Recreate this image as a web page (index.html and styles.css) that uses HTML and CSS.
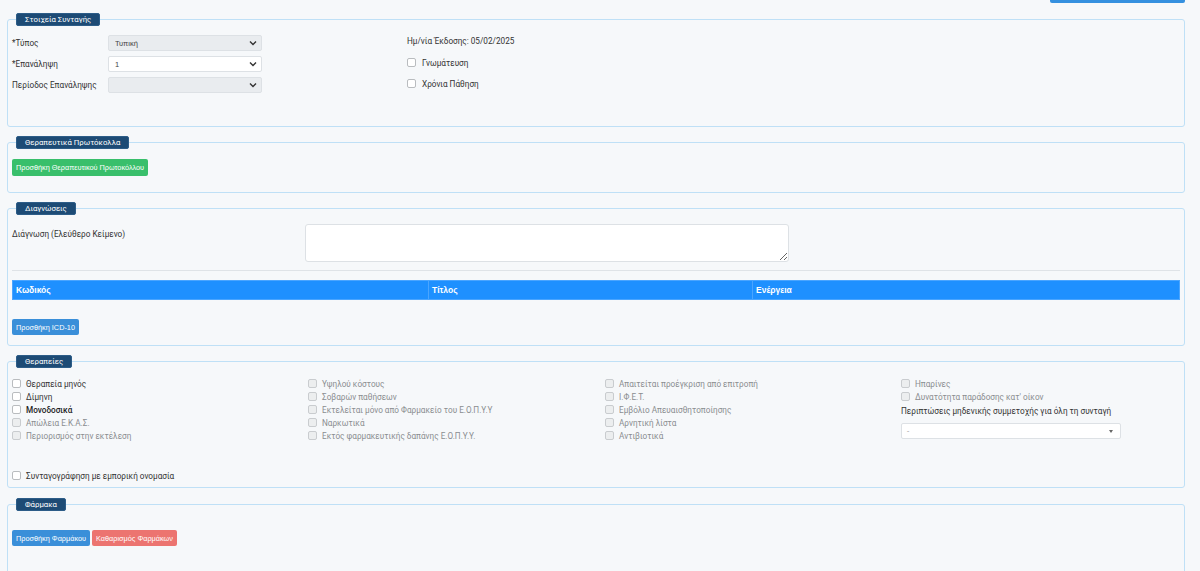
FILE: index.html
```html
<!DOCTYPE html>
<html lang="el">
<head>
<meta charset="utf-8">
<link rel="stylesheet" href="styles.css">
</head>
<body>
<div class="page">
  <div class="topbar"><button class="top-btn" type="button"></button></div>

  <section class="box box-info">
    <div class="box-title">Στοιχεία Συνταγής</div>
    <div class="info-grid">
      <div class="info-left">
        <div class="frow"><label>*Τύπος</label><select class="sel" disabled><option>Τυπική</option></select></div>
        <div class="frow"><label>*Επανάληψη</label><select class="sel white"><option>1</option></select></div>
        <div class="frow"><label>Περίοδος Επανάληψης</label><select class="sel" disabled><option></option></select></div>
      </div>
      <div class="info-right">
        <div class="date">Ημ/νία Έκδοσης: 05/02/2025</div>
        <label class="chk big"><input type="checkbox"><span>Γνωμάτευση</span></label>
        <label class="chk big"><input type="checkbox"><span>Χρόνια Πάθηση</span></label>
      </div>
    </div>
  </section>

  <section class="box box-proto">
    <div class="box-title">Θεραπευτικά Πρωτόκολλα</div>
    <button class="btn green" type="button">Προσθήκη Θεραπευτικού Πρωτοκόλλου</button>
  </section>

  <section class="box box-diag">
    <div class="box-title">Διαγνώσεις</div>
    <div class="diag-row">
      <label>Διάγνωση (Ελεύθερο Κείμενο)</label>
      <textarea class="ta"></textarea>
    </div>
    <hr class="sep">
    <table class="tbl">
      <thead><tr><th class="c1">Κωδικός</th><th class="c2">Τίτλος</th><th>Ενέργεια</th></tr></thead>
    </table>
    <button class="btn blue" type="button">Προσθήκη ICD-10</button>
  </section>

  <section class="box box-ther">
    <div class="box-title">Θεραπείες</div>
    <div class="ther-grid">
      <div class="col">
        <label class="chk"><input type="checkbox"><span>Θεραπεία μηνός</span></label>
        <label class="chk"><input type="checkbox"><span>Δίμηνη</span></label>
        <label class="chk"><input type="checkbox"><span class="strong">Μονοδοσικά</span></label>
        <label class="chk off"><input type="checkbox" disabled><span>Απώλεια Ε.Κ.Α.Σ.</span></label>
        <label class="chk off"><input type="checkbox" disabled><span>Περιορισμός στην εκτέλεση</span></label>
      </div>
      <div class="col">
        <label class="chk off"><input type="checkbox" disabled><span>Υψηλού κόστους</span></label>
        <label class="chk off"><input type="checkbox" disabled><span>Σοβαρών παθήσεων</span></label>
        <label class="chk off"><input type="checkbox" disabled><span>Εκτελείται μόνο από Φαρμακείο του Ε.Ο.Π.Υ.Υ</span></label>
        <label class="chk off"><input type="checkbox" disabled><span>Ναρκωτικά</span></label>
        <label class="chk off"><input type="checkbox" disabled><span>Εκτός φαρμακευτικής δαπάνης Ε.Ο.Π.Υ.Υ.</span></label>
      </div>
      <div class="col">
        <label class="chk off"><input type="checkbox" disabled><span>Απαιτείται προέγκριση από επιτροπή</span></label>
        <label class="chk off"><input type="checkbox" disabled><span>Ι.Φ.Ε.Τ.</span></label>
        <label class="chk off"><input type="checkbox" disabled><span>Εμβόλιο Απευαισθητοποίησης</span></label>
        <label class="chk off"><input type="checkbox" disabled><span>Αρνητική λίστα</span></label>
        <label class="chk off"><input type="checkbox" disabled><span>Αντιβιοτικά</span></label>
      </div>
      <div class="col">
        <label class="chk off"><input type="checkbox" disabled><span>Ηπαρίνες</span></label>
        <label class="chk off"><input type="checkbox" disabled><span>Δυνατότητα παράδοσης κατ' οίκον</span></label>
        <div class="zero-label">Περιπτώσεις μηδενικής συμμετοχής για όλη τη συνταγή</div>
        <div class="s2"><span class="s2-text">-</span><span class="s2-caret"></span></div>
      </div>
    </div>
    <label class="chk trade"><input type="checkbox"><span>Συνταγογράφηση με εμπορική ονομασία</span></label>
  </section>

  <section class="box box-drugs">
    <div class="box-title">Φάρμακα</div>
    <div class="btns">
      <button class="btn blue" type="button">Προσθήκη Φαρμάκου</button>
      <button class="btn red" type="button">Καθαρισμός Φαρμάκων</button>
    </div>
  </section>
</div>
</body>
</html>
```
FILE: styles.css
```css
* { box-sizing: border-box; }
html, body { margin: 0; padding: 0; }
body {
  background: #f6f8fa;
  font-family: Roboto, "Liberation Sans", Arial, sans-serif;
  font-size: 8.2px;
  color: #333;
  width: 1200px;
  height: 571px;
  overflow: hidden;
}
.page { width: 1200px; padding: 0 15px 0 7px; }

.topbar { display: flex; justify-content: flex-end; height: 3px; }
.top-btn {
  width: 135px; height: 3px; border: 0; padding: 0;
  background: #3590df; border-radius: 0 0 2px 2px;
}

.box {
  padding: 0 4px;
  border: 1px solid #bfe0f6;
  border-radius: 3px;
  margin-top: 15px;
}
.box:first-of-type { margin-top: 16px; }
.box-title {
  width: fit-content;
  margin: -7px 0 0 4px;
  padding: 0 8px;
  height: 13px;
  line-height: 12px;
  background: #1d4b75;
  color: #fff;
  font-size: 7.8px;
  border-radius: 2px;
  border: 1px solid #2d5d88;
}

/* Στοιχεία Συνταγής */
.box-info { padding-bottom: 32px; }
.info-grid { display: grid; grid-template-columns: 395px 1fr; margin-top: 9px; }
.frow { display: flex; align-items: center; height: 16px; margin-bottom: 5px; }
.frow:last-child { margin-bottom: 0; }
.frow label { width: 96px; }
.sel {
  appearance: none; -webkit-appearance: none;
  width: 154px; height: 16px;
  border: 1px solid #dde1e5; border-radius: 2px;
  background: #e9ecef url("data:image/svg+xml,%3Csvg xmlns='http://www.w3.org/2000/svg' width='8' height='6' viewBox='0 0 8 6'%3E%3Cpath d='M1 1.5 L4 4.5 L7 1.5' fill='none' stroke='%23333' stroke-width='1.4'/%3E%3C/svg%3E") no-repeat right 4px center;
  font-family: "Liberation Sans", Arial, sans-serif; font-size: 7.5px; color: #444;
  padding: 0 6px; opacity: 1;
}
.sel.white { background-color: #fff; }
.date { height: 12px; line-height: 12px; margin-bottom: 5px; color: #333; }
.chk { display: flex; align-items: center; height: 13px; color: #333; }
.chk input {
  appearance: none; -webkit-appearance: none;
  width: 9px; height: 9px; margin: 0 5px 0 0;
  border: 1px solid #b9bcbf; border-radius: 2px; background: #fff;
  flex: none;
}
.chk.off { color: #8a8d90; }
.chk.off input { background: #eceeef; border-color: #c9cccf; }
.chk.big { height: 21px; }
.chk.big input { margin-right: 6px; }
.strong { font-weight: 500; color: #222; }

/* Θεραπευτικά Πρωτόκολλα */
.box-proto { padding-bottom: 16px; }
.box-proto .btn { margin-top: 10px; }
.btn {
  display: block;
  border: 0; border-radius: 2px; color: #fff;
  font-family: "Liberation Sans", Arial, sans-serif; font-size: 7.3px;
  height: 17px; padding: 0 4px; cursor: pointer;
}
.green { background: #39bf6b; }
.blue { background: #3a8fd9; height: 16px; }
.red { background: #ec7470; height: 16px; }

/* Διαγνώσεις */
.box-diag { padding-bottom: 10px; }
.diag-row { display: grid; grid-template-columns: 293px 484px; margin-top: 9px; }
.diag-row label { padding-top: 5px; }
.ta {
  height: 38px; width: 484px; resize: vertical;
  border: 1px solid #dde1e5; border-radius: 3px; background: #fff;
  display: block;
}
.sep { border: 0; border-top: 1px solid #dfe3e7; margin: 8px 0 9px; }
.tbl { width: 100%; border-collapse: collapse; margin-bottom: 19px; }
.tbl th {
  background: #1e90ff; color: #fff; text-align: left;
  height: 19px; padding: 0 3px; font-size: 8.5px; font-weight: bold;
  font-family: "Liberation Sans", Arial, sans-serif;
  border: 1px solid #4aa5ff;
}
.tbl .c1 { width: 416px; }
.tbl .c2 { width: 324px; }

/* Θεραπείες */
.box-ther { padding-bottom: 5px; }
.ther-grid { display: grid; grid-template-columns: 296px 297px 296px 1fr; margin-top: 9px; }
.zero-label { height: 17px; line-height: 17px; color: #333; }
.s2 {
  width: 220px; height: 16px; margin-top: 3px;
  border: 1px solid #dde1e5; border-radius: 2px; background: #fff;
  display: flex; align-items: center; justify-content: space-between;
  padding: 0 7px 0 5px;
}
.s2-text { color: #999; font-size: 8px; }
.s2-caret {
  width: 0; height: 0;
  border-left: 2.5px solid transparent; border-right: 2.5px solid transparent;
  border-top: 3px solid #666;
}
.trade { margin-top: 27px; }

/* Φάρμακα */
.box-drugs { margin-top: 16px; padding-bottom: 40px; }
.btns { display: flex; gap: 2px; margin-top: 19px; }
```
